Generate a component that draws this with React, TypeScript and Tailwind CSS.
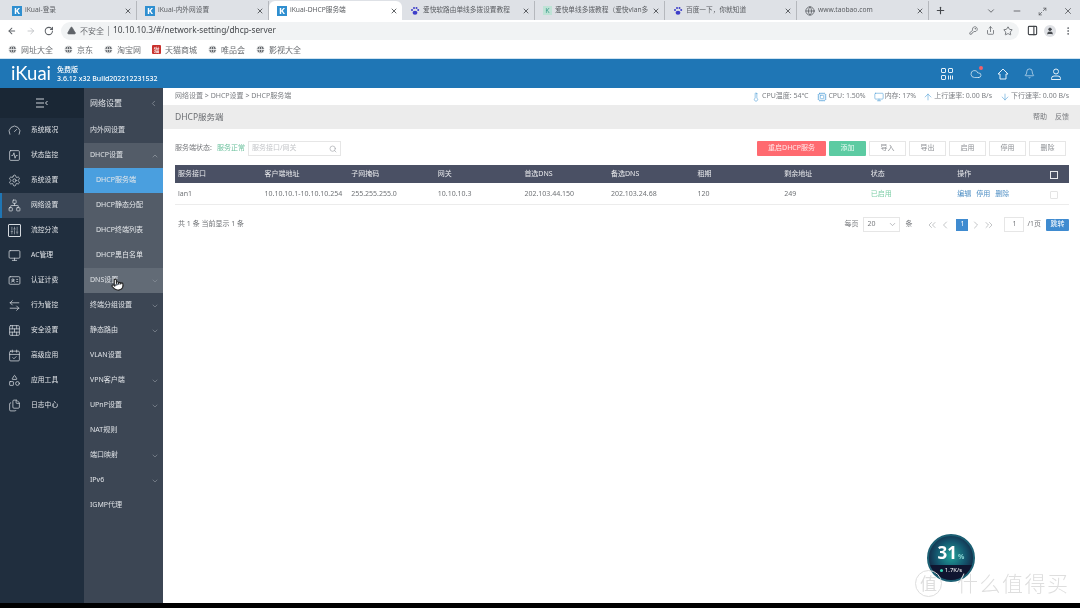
import {
  ArrowDown,
  ArrowLeft,
  ArrowLeftRight,
  ArrowRight,
  ArrowUp,
  Bell,
  BrickWall,
  CalendarCheck,
  ChevronDown,
  ChevronLeft,
  ChevronRight,
  ChevronUp,
  ChevronsLeft,
  ChevronsRight,
  Cloud,
  Cpu,
  EllipsisVertical,
  Files,
  Gauge,
  Globe,
  IdCard,
  KeyRound,
  Maximize2,
  Minus,
  Monitor,
  Network,
  PanelRight,
  Plus,
  Pointer,
  RotateCw,
  Search,
  Settings,
  Share,
  Shapes,
  SlidersVertical,
  SquareActivity,
  Star,
  Thermometer,
  TriangleAlert,
  User,
  X,
} from 'lucide-react';

const tabs = [
  { title: 'iKuai-登录', icon: 'k', width: 'w-[133px]' },
  { title: 'iKuai-内外网设置', icon: 'k', width: 'w-[132px]' },
  { title: 'iKuai-DHCP服务端', icon: 'k', width: 'w-[133px]', active: true },
  { title: '爱快软路由单线多拨设置教程', icon: 'paw', width: 'w-[133px]' },
  { title: '爱快单线多拨教程（爱快vlan多', icon: 'k2', width: 'w-[130px]' },
  { title: '百度一下，你就知道', icon: 'paw', width: 'w-[132px]' },
  { title: 'www.taobao.com', icon: 'globe', width: 'w-[132px]' },
];

const bookmarks = ['网址大全', '京东', '淘宝网', '天猫商城', '唯品会', '影视大全'];

const mainNav = [
  { label: '系统概况', icon: Gauge },
  { label: '状态监控', icon: SquareActivity },
  { label: '系统设置', icon: Settings },
  { label: '网络设置', icon: Network, active: true },
  { label: '流控分流', icon: SlidersVertical, boxed: true },
  { label: 'AC管理', icon: Monitor },
  { label: '认证计费', icon: IdCard },
  { label: '行为管控', icon: ArrowLeftRight },
  { label: '安全设置', icon: BrickWall },
  { label: '高级应用', icon: CalendarCheck },
  { label: '应用工具', icon: Shapes },
  { label: '日志中心', icon: Files },
];

const lowerSubNav = [
  { label: '终端分组设置', arrow: true },
  { label: '静态路由', arrow: true },
  { label: 'VLAN设置' },
  { label: 'VPN客户端', arrow: true },
  { label: 'UPnP设置', arrow: true },
  { label: 'NAT规则' },
  { label: '端口映射', arrow: true },
  { label: 'IPv6', arrow: true },
  { label: 'IGMP代理' },
];

const dhcpItems = ['DHCP服务端', 'DHCP静态分配', 'DHCP终端列表', 'DHCP黑白名单'];

const columns = ['服务接口', '客户端地址', '子网掩码', '网关', '首选DNS', '备选DNS', '租期', '剩余地址', '状态', '操作'];
const row = ['lan1', '10.10.10.1-10.10.10.254', '255.255.255.0', '10.10.10.3', '202.103.44.150', '202.103.24.68', '120', '249'];

const stats = [
  { label: 'CPU温度: 54℃', icon: Thermometer, margin: '' },
  { label: 'CPU: 1.50%', icon: Cpu, margin: 'ml-[9px]' },
  { label: '内存: 17%', icon: Monitor, margin: 'ml-[8px]' },
  { label: '上行速率: 0.00 B/s', icon: ArrowUp, margin: 'ml-[7px]' },
  { label: '下行速率: 0.00 B/s', icon: ArrowDown, margin: 'ml-[8px]' },
];

function TabIcon({ kind }: { kind: string }) {
  if (kind === 'globe') return <Globe size={10} className="shrink-0 text-[#5f6368]" />;
  if (kind === 'paw') {
    return (
      <svg width="10" height="10" viewBox="0 0 10 10" className="shrink-0">
        <circle cx="2" cy="4" r="1" fill="#3d3ec9" />
        <circle cx="4" cy="2" r="1" fill="#3d3ec9" />
        <circle cx="6.5" cy="2" r="1" fill="#3d3ec9" />
        <circle cx="8.2" cy="4" r="1" fill="#3d3ec9" />
        <ellipse cx="5" cy="6.8" rx="2.4" ry="2" fill="#3d3ec9" />
      </svg>
    );
  }
  if (kind === 'k2') {
    return (
      <span className="flex h-[9px] w-[9px] shrink-0 items-center justify-center bg-[#bfe3d6] text-[7px] leading-none text-[#3b9d8a]">
        K
      </span>
    );
  }
  return (
    <span className="flex h-[10px] w-[10px] shrink-0 items-center justify-center bg-[#2f8fd0] text-[9px] font-bold leading-none text-white">
      K
    </span>
  );
}

function BrowserChrome() {
  return (
    <>
      <div className="flex h-[20px] items-end bg-[#dee1e6] pl-[4px]">
        {tabs.map((tab) => (
          <div
            key={tab.title}
            className={`flex h-[19px] items-center gap-[3px] pl-[8px] pr-[4px] ${tab.width} ${
              tab.active ? 'rounded-t-[6px] bg-white' : 'border-r border-[#b5b8bd]'
            }`}
          >
            <TabIcon kind={tab.icon} />
            <span className="flex-1 overflow-hidden whitespace-nowrap text-[6.7px] text-[#5a5d61]">{tab.title}</span>
            <X size={8} strokeWidth={2.5} className="shrink-0 text-[#45484c]" />
          </div>
        ))}
        <Plus size={11} strokeWidth={2.5} className="mb-[4px] ml-[6px] text-[#45484c]" />
        <div className="ml-auto mb-[4px] flex items-center gap-[16px] pr-[7px] text-[#55585c]">
          <ChevronDown size={10} />
          <Minus size={10} />
          <Maximize2 size={9} />
          <X size={10} />
        </div>
      </div>
      <div className="flex h-[20px] items-center bg-white pl-[7px] pr-[7px] pt-px text-[#5f6368]">
        <ArrowLeft size={10} strokeWidth={2.5} />
        <ArrowRight size={10} strokeWidth={2} className="ml-[9px] text-[#b9bcc0]" />
        <RotateCw size={10} strokeWidth={2.5} className="ml-[9px]" />
        <div className="ml-[7px] flex h-[18px] w-[958px] shrink-0 items-center rounded-full bg-[#f1f3f4] pl-[6px] pr-[6px]">
          <TriangleAlert size={9} fill="#5f6368" className="text-[#5f6368]" />
          <span className="ml-[4px] text-[8px] text-[#6b6e72]">不安全</span>
          <span className="mx-[4px] h-[10px] w-px bg-[#a8abae]" />
          <span className="text-[8.3px] text-[#44474b]">10.10.10.3/#/network-setting/dhcp-server</span>
          <div className="ml-auto flex items-center gap-[8px]">
            <KeyRound size={9} />
            <Share size={9} />
            <Star size={10} />
          </div>
        </div>
        <PanelRight size={11} strokeWidth={2.5} className="ml-[8px] shrink-0 text-[#45484c]" />
        <span className="ml-[6px] flex h-[12px] w-[12px] shrink-0 items-center justify-center rounded-full bg-[#dfe1e5]">
          <User size={8} fill="#44474b" className="text-[#44474b]" />
        </span>
        <EllipsisVertical size={10} className="ml-[7px] shrink-0" />
      </div>
      <div className="flex h-[19px] items-center gap-[11px] border-b border-[#cfe3f1] bg-white pl-[8px] pt-px">
        {bookmarks.map((name) => (
          <div key={name} className="flex items-center gap-[4px]">
            {name === '天猫商城' ? (
              <span className="flex h-[9px] w-[9px] items-center justify-center rounded-[1px] bg-[#c9302c] text-[6px] leading-none text-white">
                猫
              </span>
            ) : (
              <Globe size={9} fill="#5f6368" className="text-white" />
            )}
            <span className="text-[8px] text-[#6a6d71]">{name}</span>
          </div>
        ))}
      </div>
    </>
  );
}

function QrIcon() {
  return (
    <svg width="12" height="12" viewBox="0 0 12 12" fill="none" stroke="currentColor" strokeWidth="1">
      <rect x="0.5" y="0.5" width="4" height="4" rx="0.5" />
      <rect x="7.5" y="0.5" width="4" height="4" rx="0.5" />
      <rect x="0.5" y="7.5" width="4" height="4" rx="0.5" />
      <path d="M7.5 7.5v4M9.5 7.5v4M11.5 7.5v4" />
    </svg>
  );
}

function HomeIcon() {
  return (
    <svg width="12" height="12" viewBox="0 0 12 12" fill="none" stroke="currentColor" strokeWidth="1" strokeLinejoin="round">
      <path d="M6 1l5 5H9v5H3V6H1z" />
    </svg>
  );
}

function ProfileIcon() {
  return (
    <svg width="12" height="12" viewBox="0 0 12 12" fill="none" stroke="currentColor" strokeWidth="1">
      <circle cx="6" cy="3.5" r="2.5" />
      <path d="M1.5 11.5v-1a2.5 2.5 0 0 1 2.5-2.5h4a2.5 2.5 0 0 1 2.5 2.5v1z" />
    </svg>
  );
}

function AppHeader() {
  return (
    <div className="flex h-[29px] items-center bg-[#1f76b5] pl-[11px] pr-[18px] text-white">
      <span className="w-[39px] font-['Lato',sans-serif] text-[18.5px] leading-none">iKuai</span>
      <div className="ml-[7px] flex flex-col text-[7px] font-medium leading-[9px]">
        <span>免费版</span>
        <span>3.6.12 x32 Build202212231532</span>
      </div>
      <div className="ml-auto flex items-center gap-[15px] text-[#e4f0f8]">
        <QrIcon />
        <span className="relative ml-[2px]">
          <Cloud size={12} strokeWidth={1.4} />
          <span className="absolute -right-[1px] -top-[2px] h-[4px] w-[4px] rounded-full bg-[#f0606a]" />
        </span>
        <HomeIcon />
        <Bell size={11} strokeWidth={1.4} />
        <ProfileIcon />
      </div>
    </div>
  );
}

function SubRow({ label, arrow, hover }: { label: string; arrow?: boolean; hover?: boolean }) {
  return (
    <div className={`relative flex h-[25px] items-center justify-between pl-[6px] pr-[4px] text-[7px] text-[#dfe2e6] ${hover ? 'bg-[#626b76]' : ''}`}>
      <span>{label}</span>
      {arrow && <ChevronDown size={8} className="text-[#8b939c]" />}
      {hover && (
        <Pointer size={13} fill="#ffffff" className="absolute left-[27px] top-[10px] text-[#222222]" />
      )}
    </div>
  );
}

function Sidebar() {
  return (
    <div className="flex w-[163px] shrink-0">
      <div className="flex w-[84px] flex-col bg-[#202e3e]">
        <div className="flex h-[30px] shrink-0 items-center justify-center bg-[#1a2735]">
          <svg width="12" height="10" viewBox="0 0 12 10" fill="none" stroke="#ccd2d8" strokeWidth="1">
            <path d="M0 1h8M0 5h8M0 9h8M11.5 3L9.5 5l2 2" />
          </svg>
        </div>
        {mainNav.map((item) => (
          <div
            key={item.label}
            className={`flex h-[25px] items-center pl-[8px] text-[6.8px] text-[#dfe2e6] ${
              item.active ? 'border-l-2 border-[#1f76b5] bg-[#3a4656] !pl-[6px]' : ''
            }`}
          >
            <span className={`flex h-[13px] w-[13px] items-center justify-center ${item.boxed ? 'rounded-[1px] border border-[#d4d9de]' : ''}`}>
              <item.icon size={item.boxed ? 9 : 13} strokeWidth={1.4} className="text-[#d4d9de]" />
            </span>
            <span className="ml-[10px]">{item.label}</span>
          </div>
        ))}
      </div>
      <div className="flex w-[79px] flex-col bg-[#3c4654]">
        <div className="flex h-[30px] shrink-0 items-center justify-between pl-[6px] pr-[5px] text-[8px] text-[#dfe2e6]">
          <span>网络设置</span>
          <ChevronLeft size={9} className="text-[#8b939c]" />
        </div>
        <SubRow label="内外网设置" />
        <div className="flex h-[25px] items-center justify-between bg-[#535c68] pl-[6px] pr-[4px] text-[7px] text-[#dfe2e6]">
          <span>DHCP设置</span>
          <ChevronUp size={8} className="text-[#9aa1a9]" />
        </div>
        <div className="bg-[#535c68]">
          {dhcpItems.map((label, i) => (
            <div
              key={label}
              className={`flex h-[25px] items-center pl-[12px] text-[7px] text-[#e4e7ea] ${i === 0 ? 'bg-[#4a9fdf]' : ''}`}
            >
              {label}
            </div>
          ))}
        </div>
        <SubRow label="DNS设置" arrow hover />
        {lowerSubNav.map((item) => (
          <SubRow key={item.label} label={item.label} arrow={item.arrow} />
        ))}
      </div>
    </div>
  );
}

function ToolButton({ label }: { label: string }) {
  return (
    <button className="h-[15px] w-[37px] border border-[#e6e6e6] bg-white text-[7px] text-[#8d9094]">{label}</button>
  );
}

function DhcpTable() {
  return (
    <div className="mt-[9px] text-[7px]">
      <div className="grid h-[18px] grid-cols-[repeat(10,86.6px)_1fr] items-center bg-[#4a5064] pt-px text-[#e8e9ec]">
        {columns.map((col) => (
          <span key={col} className="pl-[3px]">{col}</span>
        ))}
        <span className="ml-[9px] h-[8px] w-[8px] border border-[#e8e9ec]" />
      </div>
      <div className="grid h-[22px] grid-cols-[repeat(10,86.6px)_1fr] items-center border-b border-[#ececec] pt-[2px] text-[#6f7276]">
        {row.map((cell) => (
          <span key={cell} className="pl-[3px]">{cell}</span>
        ))}
        <span className="pl-[3px] text-[#7fcfa8]">已启用</span>
        <span className="flex gap-[5px] pl-[3px] text-[#4f8fc4]">
          <span>编辑</span>
          <span>停用</span>
          <span>删除</span>
        </span>
        <span className="ml-[9px] h-[8px] w-[8px] rounded-[1px] border border-[#e4e4e4]" />
      </div>
    </div>
  );
}

function Pagination() {
  return (
    <div className="mt-[12px] flex items-center text-[7px] text-[#77797d]">
      <span className="ml-[3px] text-[#6f7276]">共 1 条 当前显示 1 条</span>
      <div className="ml-auto flex items-center">
        <span>每页</span>
        <div className="ml-[5px] flex h-[15px] w-[37px] items-center justify-between border border-[#e6e6e6] pl-[3px] pr-[2px]">
          <span>20</span>
          <ChevronDown size={9} className="text-[#a5a8ac]" />
        </div>
        <span className="ml-[5px]">条</span>
        <ChevronsLeft size={12} strokeWidth={1.2} className="ml-[14px] text-[#9a9da1]" />
        <ChevronLeft size={12} strokeWidth={1.2} className="ml-[1px] text-[#9a9da1]" />
        <span className="ml-[5px] flex h-[12px] w-[12px] items-center justify-center bg-[#3f8bd0] text-white">1</span>
        <ChevronRight size={12} strokeWidth={1.2} className="ml-[2px] text-[#9a9da1]" />
        <ChevronsRight size={12} strokeWidth={1.2} className="ml-[1px] text-[#9a9da1]" />
        <span className="ml-[9px] flex h-[15px] w-[20px] items-center justify-center border border-[#e6e6e6]">1</span>
        <span className="ml-[3px]">/1页</span>
        <button className="ml-[5px] h-[12px] w-[23px] rounded-[1px] bg-[#3f8bd0] text-[7px] text-white">跳转</button>
      </div>
    </div>
  );
}

function MainContent() {
  return (
    <div className="flex min-w-0 flex-1 flex-col bg-white">
      <div className="flex h-[17px] items-center justify-between pl-[12px] pr-[11px] text-[7px] text-[#7b7e82]">
        <span>网络设置 &gt; DHCP设置 &gt; DHCP服务端</span>
        <div className="flex items-center">
          {stats.map((s) => (
            <span key={s.label} className={`flex items-center gap-[1px] ${s.margin}`}>
              <s.icon size={10} strokeWidth={1.4} className="text-[#4f9fd8]" />
              <span>{s.label}</span>
            </span>
          ))}
        </div>
      </div>
      <div className="flex h-[24px] items-center justify-between bg-[#ececec] pl-[12px] pr-[11px]">
        <span className="text-[8.5px] text-[#6b6e72]">DHCP服务端</span>
        <span className="flex gap-[8px] text-[7px] text-[#77797d]">
          <span>帮助</span>
          <span>反馈</span>
        </span>
      </div>
      <div className="pl-[12px] pr-[11px]">
        <div className="mt-[12px] flex h-[15px] items-center">
          <span className="text-[7px] text-[#77797d]">服务端状态:</span>
          <span className="ml-[5px] text-[7px] text-[#6fc3a0]">服务正常</span>
          <div className="ml-[3px] flex h-[15px] w-[93px] items-center justify-between border border-[#e6e6e6] pl-[3px] pr-[3px]">
            <span className="text-[7px] text-[#c4c6c9]">服务接口/网关</span>
            <Search size={8} className="text-[#a5a8ac]" />
          </div>
          <div className="ml-auto mr-[3px] flex items-center gap-[3px]">
            <button className="h-[15px] w-[69px] rounded-[1px] bg-[#ff6a70] text-[7px] text-[#ffe9ea]">重启DHCP服务</button>
            <button className="h-[15px] w-[37px] rounded-[1px] bg-[#5ccba2] text-[7px] text-[#e9fbf3]">添加</button>
            <ToolButton label="导入" />
            <ToolButton label="导出" />
            <ToolButton label="启用" />
            <ToolButton label="停用" />
            <ToolButton label="删除" />
          </div>
        </div>
        <DhcpTable />
        <Pagination />
      </div>
    </div>
  );
}

function SpeedGauge() {
  return (
    <div className="absolute left-[927px] top-[534px] h-[48px] w-[48px] overflow-hidden rounded-full border-2 border-[#1b5f73] bg-[radial-gradient(circle_at_50%_45%,#22a39a_0%,#14566e_45%,#141d3c_80%)]">
      <div className="mt-[7px] flex items-baseline justify-center font-['Noto_Sans',sans-serif] font-bold text-white">
        <span className="text-[17px] leading-[20px]">31</span>
        <span className="ml-[1px] text-[7px] text-[#8fd8d6]">%</span>
      </div>
      <div className="mt-[2px] flex h-[20px] justify-center gap-[2px] bg-[#0f1530] pt-[1px] text-[6px] text-white">
        <span className="mt-[3px] h-[3px] w-[3px] rounded-full bg-[#35d6b5]" />
        <span>1.7K/s</span>
      </div>
    </div>
  );
}

function Watermark() {
  return (
    <div className="absolute left-[915px] top-[570px] flex items-center text-[#dedede]">
      <span className="flex h-[27px] w-[27px] items-center justify-center rounded-full border border-[#dedede] text-[17px] leading-none">值</span>
      <span className="ml-[15px] text-[21px] font-light leading-none tracking-[1.5px]">什么值得买</span>
    </div>
  );
}

export default function App() {
  return (
    <div className="relative flex h-[608px] w-[1080px] flex-col overflow-hidden bg-white font-['Noto_Sans','Noto_Sans_CJK_SC',sans-serif] blur-[0.5px]">
      <BrowserChrome />
      <AppHeader />
      <div className="flex min-h-0 flex-1">
        <Sidebar />
        <MainContent />
      </div>
      <div className="h-[5px] shrink-0 bg-black" />
      <SpeedGauge />
      <Watermark />
    </div>
  );
}
